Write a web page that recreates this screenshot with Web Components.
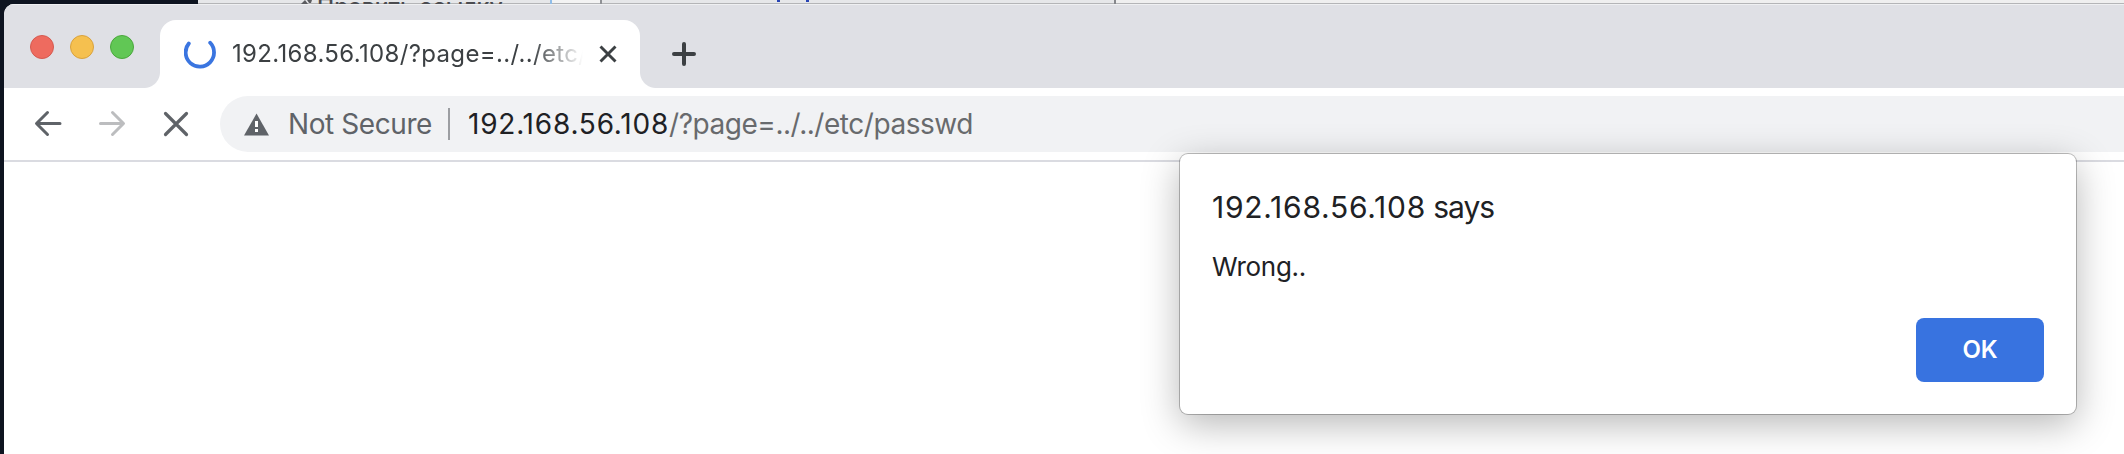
<!DOCTYPE html>
<html lang="en">
<head>
<meta charset="utf-8">
<title>192.168.56.108/?page=../../etc/passwd</title>
<style>
html,body{margin:0;height:100%;overflow:hidden;background:#0e1420;font-family:Inter,"Liberation Sans",sans-serif}
</style>
</head>
<body>
<desktop-stage>
  <background-window slot="back"></background-window>
  <browser-window>
    <tab-strip slot="tabs"><browser-tab><fit-text width="445">192.168.56.108/?page=../../etc/passwd</fit-text></browser-tab></tab-strip>
    <tool-bar slot="tools">
      <omni-box>
        <fit-text slot="status" width="144">Not Secure</fit-text>
        <fit-text slot="host" width="201">192.168.56.108</fit-text>
        <fit-text slot="path" width="304">/?page=../../etc/passwd</fit-text>
      </omni-box>
    </tool-bar>
  </browser-window>
  <alert-dialog slot="dialog">
    <fit-text slot="title" width="214">192.168.56.108</fit-text><fit-text slot="title" width="68"> says</fit-text>
    <fit-text slot="message" width="94">Wrong..</fit-text>
    <push-button slot="action"><fit-text width="35">OK</fit-text></push-button>
  </alert-dialog>
</desktop-stage>
<script>
const define = (name, html, after) => customElements.define(name, class extends HTMLElement {
  constructor() { super(); this.attachShadow({mode: 'open'}).innerHTML = html; }
  connectedCallback() { if (after) after(this); }
});

define('desktop-stage', `<style>
:host{display:grid;grid-template:454px / 2124px;overflow:hidden;width:2124px;height:454px;background:#0e1420}
slot{display:contents}
::slotted(*){grid-area:1/1}
</style><slot name="back"></slot><slot></slot><slot name="dialog"></slot>`);

// Sliver of another window behind the browser
define('background-window', `<style>
:host{display:flex;height:4px;margin-left:198px;overflow:hidden;background:linear-gradient(#e6e7e9 0 3px,#b4b5b7 3px);font-size:23px;line-height:28px;color:#4b4c50}
div{flex:none}
.a{width:354px;display:flex;box-sizing:border-box;padding-left:103px;border-right:2px solid #90bde8;white-space:nowrap}
.a svg{flex:none;margin-right:5px}
.label{margin-top:-7px;font-weight:500}
.b{width:50px;box-sizing:border-box;border-right:2px solid #909296;background:linear-gradient(#f3f3f3 0 3px,#b4b5b7 3px)}
.c{width:514px;display:flex;box-sizing:border-box;padding-left:175px;gap:26px;border-right:2px solid #85878b}
.c i{width:3px;height:2px;background:#2844b4}
.d{flex:1;background:linear-gradient(#efefef 0 3px,#b4b5b7 3px)}
</style>
<div class="a"><svg width="11" height="4"><path d="M0 4 4 0 7 4ZM6 0H11L10 3H8Z" fill="#5b5c60"/></svg><span class="label">Править ссылку</span></div><div class="b"></div><div class="c"><i></i><i></i></div><div class="d"></div>`);

define('browser-window', `<style>
:host{display:flex;flex-direction:column;margin:4px 0 0 4px;border-radius:10px 0 0 0;overflow:hidden;background:#fff;box-sizing:border-box}
</style><slot name="tabs"></slot><slot name="tools"></slot>`);

define('tab-strip', `<style>
:host{display:flex;height:84px;background:#dfe0e5;box-shadow:inset 0 1px #eff0f2;align-items:flex-end;flex:none}
.lights{display:flex;gap:16px;padding:0 26px;height:24px;align-self:flex-start;margin-top:31px}
.lights i{width:24px;height:24px;border-radius:50%;box-sizing:border-box;border:1px solid}
.r{background:#ee6b5f;border-color:#d55a50!important}.y{background:#f5c04f;border-color:#d9a23d!important}.g{background:#61c755;border-color:#4aa73c!important}
.plus{margin:0 0 21px 31px;display:block}
</style><div class="lights"><i class="r"></i><i class="y"></i><i class="g"></i></div><slot></slot>
<svg class="plus" width="26" height="26"><path d="M13 3V23M3 13H23" stroke="#3c4043" stroke-width="4" stroke-linecap="round" fill="none"/></svg>`);

define('browser-tab', `<style>
:host{display:flex;align-items:center;position:relative;width:480px;height:68px;border-radius:16px 16px 0 0;background:#fff;box-sizing:border-box;padding-left:24px;color:#3c4043;font-size:24px}
:host::before,:host::after{content:"";position:absolute;bottom:0;width:16px;height:16px}
:host::before{right:100%;background:radial-gradient(circle at 0 0,transparent 15.5px,#fff 16.5px)}
:host::after{left:100%;background:radial-gradient(circle at 100% 0,transparent 15.5px,#fff 16.5px)}
.title{width:351px;margin-left:16px;overflow:hidden;white-space:nowrap;-webkit-mask:linear-gradient(90deg,#000 300px,transparent 351px);mask:linear-gradient(90deg,#000 300px,transparent 351px)}
.close{margin-left:14px}
svg{display:block;flex:none}
</style><svg width="32" height="32"><path d="M4.800 5.500A14.200 14.200 0 1 0 26.200 4.700" fill="none" stroke="#3a75e0" stroke-width="3.8" stroke-linecap="round"/></svg>
<div class="title"><slot></slot></div>
<svg class="close" width="22" height="22"><path d="M3.500 3.500 18.500 18.500M18.500 3.500 3.500 18.500" stroke="#3c4043" stroke-width="2.9" fill="none"/></svg>`);

define('tool-bar', `<style>
:host{display:flex;height:74px;box-sizing:border-box;padding-top:8px;border-bottom:2px solid #dadbe1;background:#fff;flex:none}
svg{display:block;flex:none}
</style><svg width="216" height="56" fill="none" stroke="#5f6368" stroke-width="3" stroke-linecap="round" stroke-linejoin="round">
<path d="M56 27.500H33M43.500 16.500 32.500 27.500 43.500 38.500"/>
<path d="M96.500 27.500H119M108.500 16.500 119.500 27.500 108.500 38.500" stroke="#bcbdbf"/>
<path d="M161.500 17.500 182.500 38.500M182.500 17.500 161.500 38.500" stroke-width="3.2"/></svg><slot></slot>`);

define('omni-box', `<style>
:host{display:flex;flex:1;align-items:center;height:56px;border-radius:28px 0 0 28px;background:#f1f2f4;box-sizing:border-box;padding-left:24px;font-size:28px;color:#5f6368}
svg{display:block;margin-right:19px;flex:none}
.rule{width:2px;height:32px;background:#9c9ea2;margin:0 18px 0 16px}
.host{color:#202124}.path{color:#686a6d}
</style><svg width="25" height="24"><path d="M12.500 1.500 25 23.500H0Z" fill="#5f6368"/><path d="M12.500 9V15M12.500 17V20" stroke="#fff" stroke-width="3"/></svg>
<slot name="status"></slot><span class="rule"></span><span class="host"><slot name="host"></slot></span><span class="path"><slot name="path"></slot></span>`);

define('alert-dialog', `<style>
:host{display:flex;flex-direction:column;box-sizing:border-box;width:896px;height:260px;margin:154px 0 0 1180px;padding:31px 32px 32px;background:#fff;border-radius:8px;color:#202124;box-shadow:0 0 0 1px rgba(0,0,0,.25),0 10px 38px rgba(0,0,0,.29)}
.title{font-size:30px;line-height:44px}
.message{font-size:26px;line-height:36px;margin-top:20px}
.actions{display:flex;justify-content:flex-end;margin-top:auto}
</style><div class="title"><slot name="title"></slot></div><div class="message"><slot name="message"></slot></div><div class="actions"><slot name="action"></slot></div>`);

define('push-button', `<style>
:host{display:flex;align-items:center;justify-content:center;width:128px;height:64px;border-radius:8px;background:#3873e0;color:#fff;font-size:24px;font-weight:600}
</style><slot></slot>`);

// A single line whose tracking is adjusted to fill the width attribute
define('fit-text', `<style>:host{display:inline-block;white-space:pre;line-height:1.3}span{display:inline-block}</style><span><slot></slot></span>`, el => {
  const span = el.shadowRoot.querySelector('span');
  span.style.letterSpacing = '0px';
  const n = el.textContent.length, w = span.getBoundingClientRect().width;
  span.style.letterSpacing = (Number(el.getAttribute('width')) - w) / n + 'px';
});
// Measure again once every container has its shadow styles
document.querySelectorAll('fit-text').forEach(el => el.connectedCallback());
</script>
</body>
</html>
